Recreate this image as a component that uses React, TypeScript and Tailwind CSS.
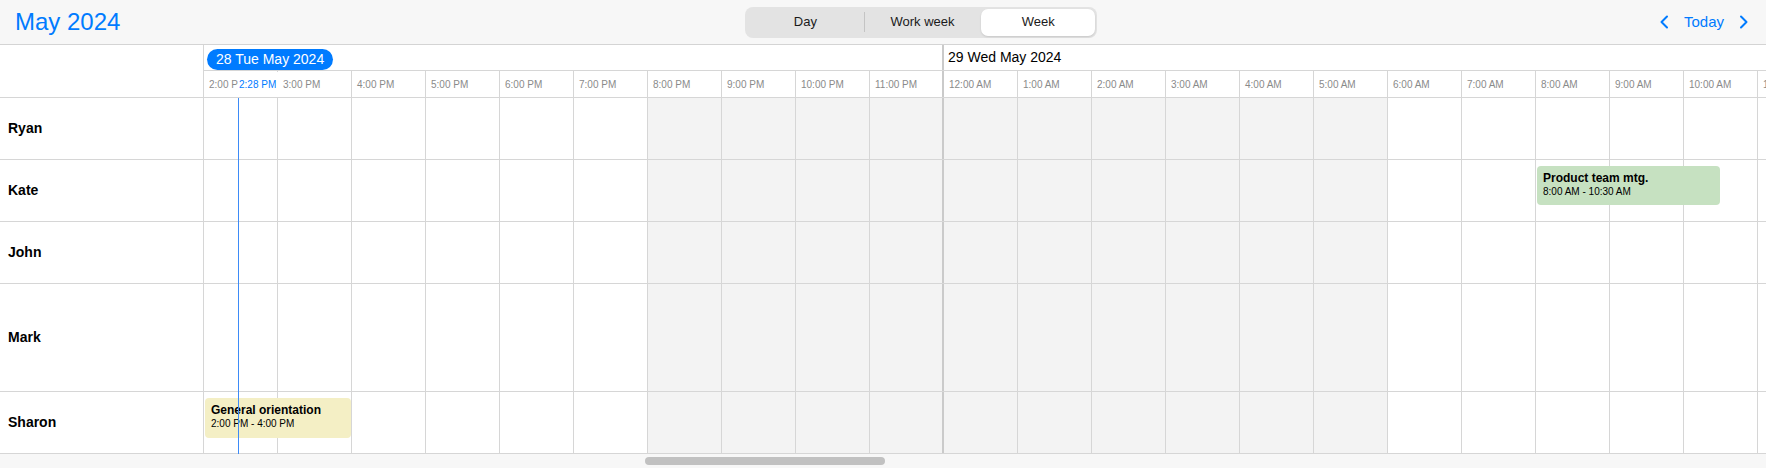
import React from 'react';

type Slot = { day: number; hour: number };

const resources = [
  { name: 'Ryan', height: 'h-[62px]' },
  { name: 'Kate', height: 'h-[62px]' },
  { name: 'John', height: 'h-[62px]' },
  { name: 'Mark', height: 'h-[108px]' },
  { name: 'Sharon', height: 'h-[62px]' },
];

// visible slots: 28 May from 2 PM, then all of 29 May
const slots: Slot[] = [
  ...Array.from({ length: 10 }, (_, i) => ({ day: 28, hour: 14 + i })),
  ...Array.from({ length: 24 }, (_, i) => ({ day: 29, hour: i })),
];

const formatHour = (h: number) => `${h % 12 === 0 ? 12 : h % 12}:00 ${h < 12 ? 'AM' : 'PM'}`;
const isOffHours = (h: number) => h < 6 || h >= 20;
const isDayEnd = (s: Slot) => s.day === 28 && s.hour === 23;

const ChevronLeft = () => (
  <svg width="10" height="14" viewBox="0 0 10 14" fill="none">
    <path d="M8 1.5 2.5 7 8 12.5" stroke="#007bff" strokeWidth="2" strokeLinecap="round" strokeLinejoin="round" />
  </svg>
);

const ChevronRight = () => (
  <svg width="10" height="14" viewBox="0 0 10 14" fill="none">
    <path d="M2 1.5 7.5 7 2 12.5" stroke="#007bff" strokeWidth="2" strokeLinecap="round" strokeLinejoin="round" />
  </svg>
);

const Event = ({ title, time, className }: { title: string; time: string; className: string }) => (
  <div className={`absolute rounded-[4px] pl-[6px] pt-[5px] text-black ${className}`}>
    <div className="text-[12px] font-bold leading-[14px] whitespace-nowrap">{title}</div>
    <div className="text-[10px] leading-[14px] whitespace-nowrap">{time}</div>
  </div>
);

export default function App() {
  return (
    <div className="w-[1766px] h-[468px] overflow-hidden bg-white flex flex-col font-['Liberation_Sans',Arial,sans-serif]">
      {/* Toolbar */}
      <div className="h-[45px] shrink-0 flex items-center bg-[#f7f7f7] border-b border-[#d4d4d4]">
        <div className="w-[745px] pl-[15px] text-[24px] text-[#007bff] leading-none">May 2024</div>
        <div className="w-[352px] h-[31px] rounded-[8px] bg-[#e3e3e3] flex items-center px-[2px] text-[13px] text-[#1a1a1a]">
          <div className="w-[117px] text-center">Day</div>
          <div className="w-px h-[20px] bg-[#c4c4c4]" />
          <div className="w-[116px] text-center">Work week</div>
          <div className="w-[114px] h-[27px] ml-[1px] rounded-[7px] bg-white shadow-[0_1px_2px_rgba(0,0,0,0.12)] flex items-center justify-center">
            Week
          </div>
        </div>
        <div className="flex-1 flex items-center justify-end gap-[15px] pr-[17px] text-[15px] text-[#007bff]">
          <ChevronLeft />
          <span>Today</span>
          <ChevronRight />
        </div>
      </div>

      <div className="flex flex-1 min-h-0">
        {/* Resource column */}
        <div className="w-[204px] shrink-0 border-r border-[#d6d6d6] flex flex-col">
          <div className="h-[53px] border-b border-[#d6d6d6]" />
          {resources.map((r) => (
            <div key={r.name} className={`${r.height} border-b border-[#d6d6d6] flex items-center pl-[8px] text-[14px] font-bold text-black`}>
              {r.name}
            </div>
          ))}
        </div>

        {/* Timeline */}
        <div className="flex-1 overflow-hidden relative">
          <div className="w-max flex flex-col">
            <div className="h-[26px] flex border-b border-[#d6d6d6]">
              <div className="w-[740px] border-r-2 border-[#cacaca] pl-[3px] pt-[2px]">
                <div className="inline-flex h-[21px] items-center rounded-full bg-[#007bff] px-[9px] text-[14px] text-white">
                  28 Tue May 2024
                </div>
              </div>
              <div className="w-[1776px] pl-[4px] flex items-center text-[14px] text-black">29 Wed May 2024</div>
            </div>

            <div className="h-[27px] flex border-b border-[#d6d6d6]">
              {slots.map((s) => (
                <div
                  key={`${s.day}-${s.hour}`}
                  className={`w-[74px] shrink-0 flex items-center pl-[5px] text-[10px] text-[#8a8a8a] whitespace-nowrap ${
                    isDayEnd(s) ? 'border-r-2 border-[#cacaca]' : 'border-r border-[#d6d6d6]'
                  }`}
                >
                  {formatHour(s.hour)}
                </div>
              ))}
            </div>

            {resources.map((r) => (
              <div key={r.name} className={`${r.height} relative flex border-b border-[#d6d6d6]`}>
                {slots.map((s) => (
                  <div
                    key={`${s.day}-${s.hour}`}
                    className={`w-[74px] shrink-0 ${isOffHours(s.hour) ? 'bg-[#f3f3f3]' : ''} ${
                      isDayEnd(s) ? 'border-r-2 border-[#cacaca]' : 'border-r border-[#d6d6d6]'
                    }`}
                  />
                ))}
                {r.name === 'Kate' && (
                  <Event
                    title="Product team mtg."
                    time="8:00 AM - 10:30 AM"
                    className="left-[1333px] top-[6px] w-[183px] h-[39px] bg-[#c6e1c1]"
                  />
                )}
                {r.name === 'Sharon' && (
                  <Event
                    title="General orientation"
                    time="2:00 PM - 4:00 PM"
                    className="left-[1px] top-[6px] w-[146px] h-[40px] bg-[#f4efc5]"
                  />
                )}
              </div>
            ))}
          </div>

          {/* Now indicator */}
          <div className="absolute left-[34px] top-[53px] bottom-0 w-px bg-[#3d8bf7]" />
          <div className="absolute left-[34px] top-[27px] h-[25px] flex items-center bg-white pl-[1px] pr-[2px] text-[10px] text-[#007bff]">
            2:28 PM
          </div>
        </div>
      </div>

      {/* Horizontal scrollbar */}
      <div className="h-[14px] shrink-0 bg-[#f7f7f7] pt-[3px]">
        <div className="ml-[645px] w-[240px] h-[8px] rounded-full bg-[#c1c1c1]" />
      </div>
    </div>
  );
}
